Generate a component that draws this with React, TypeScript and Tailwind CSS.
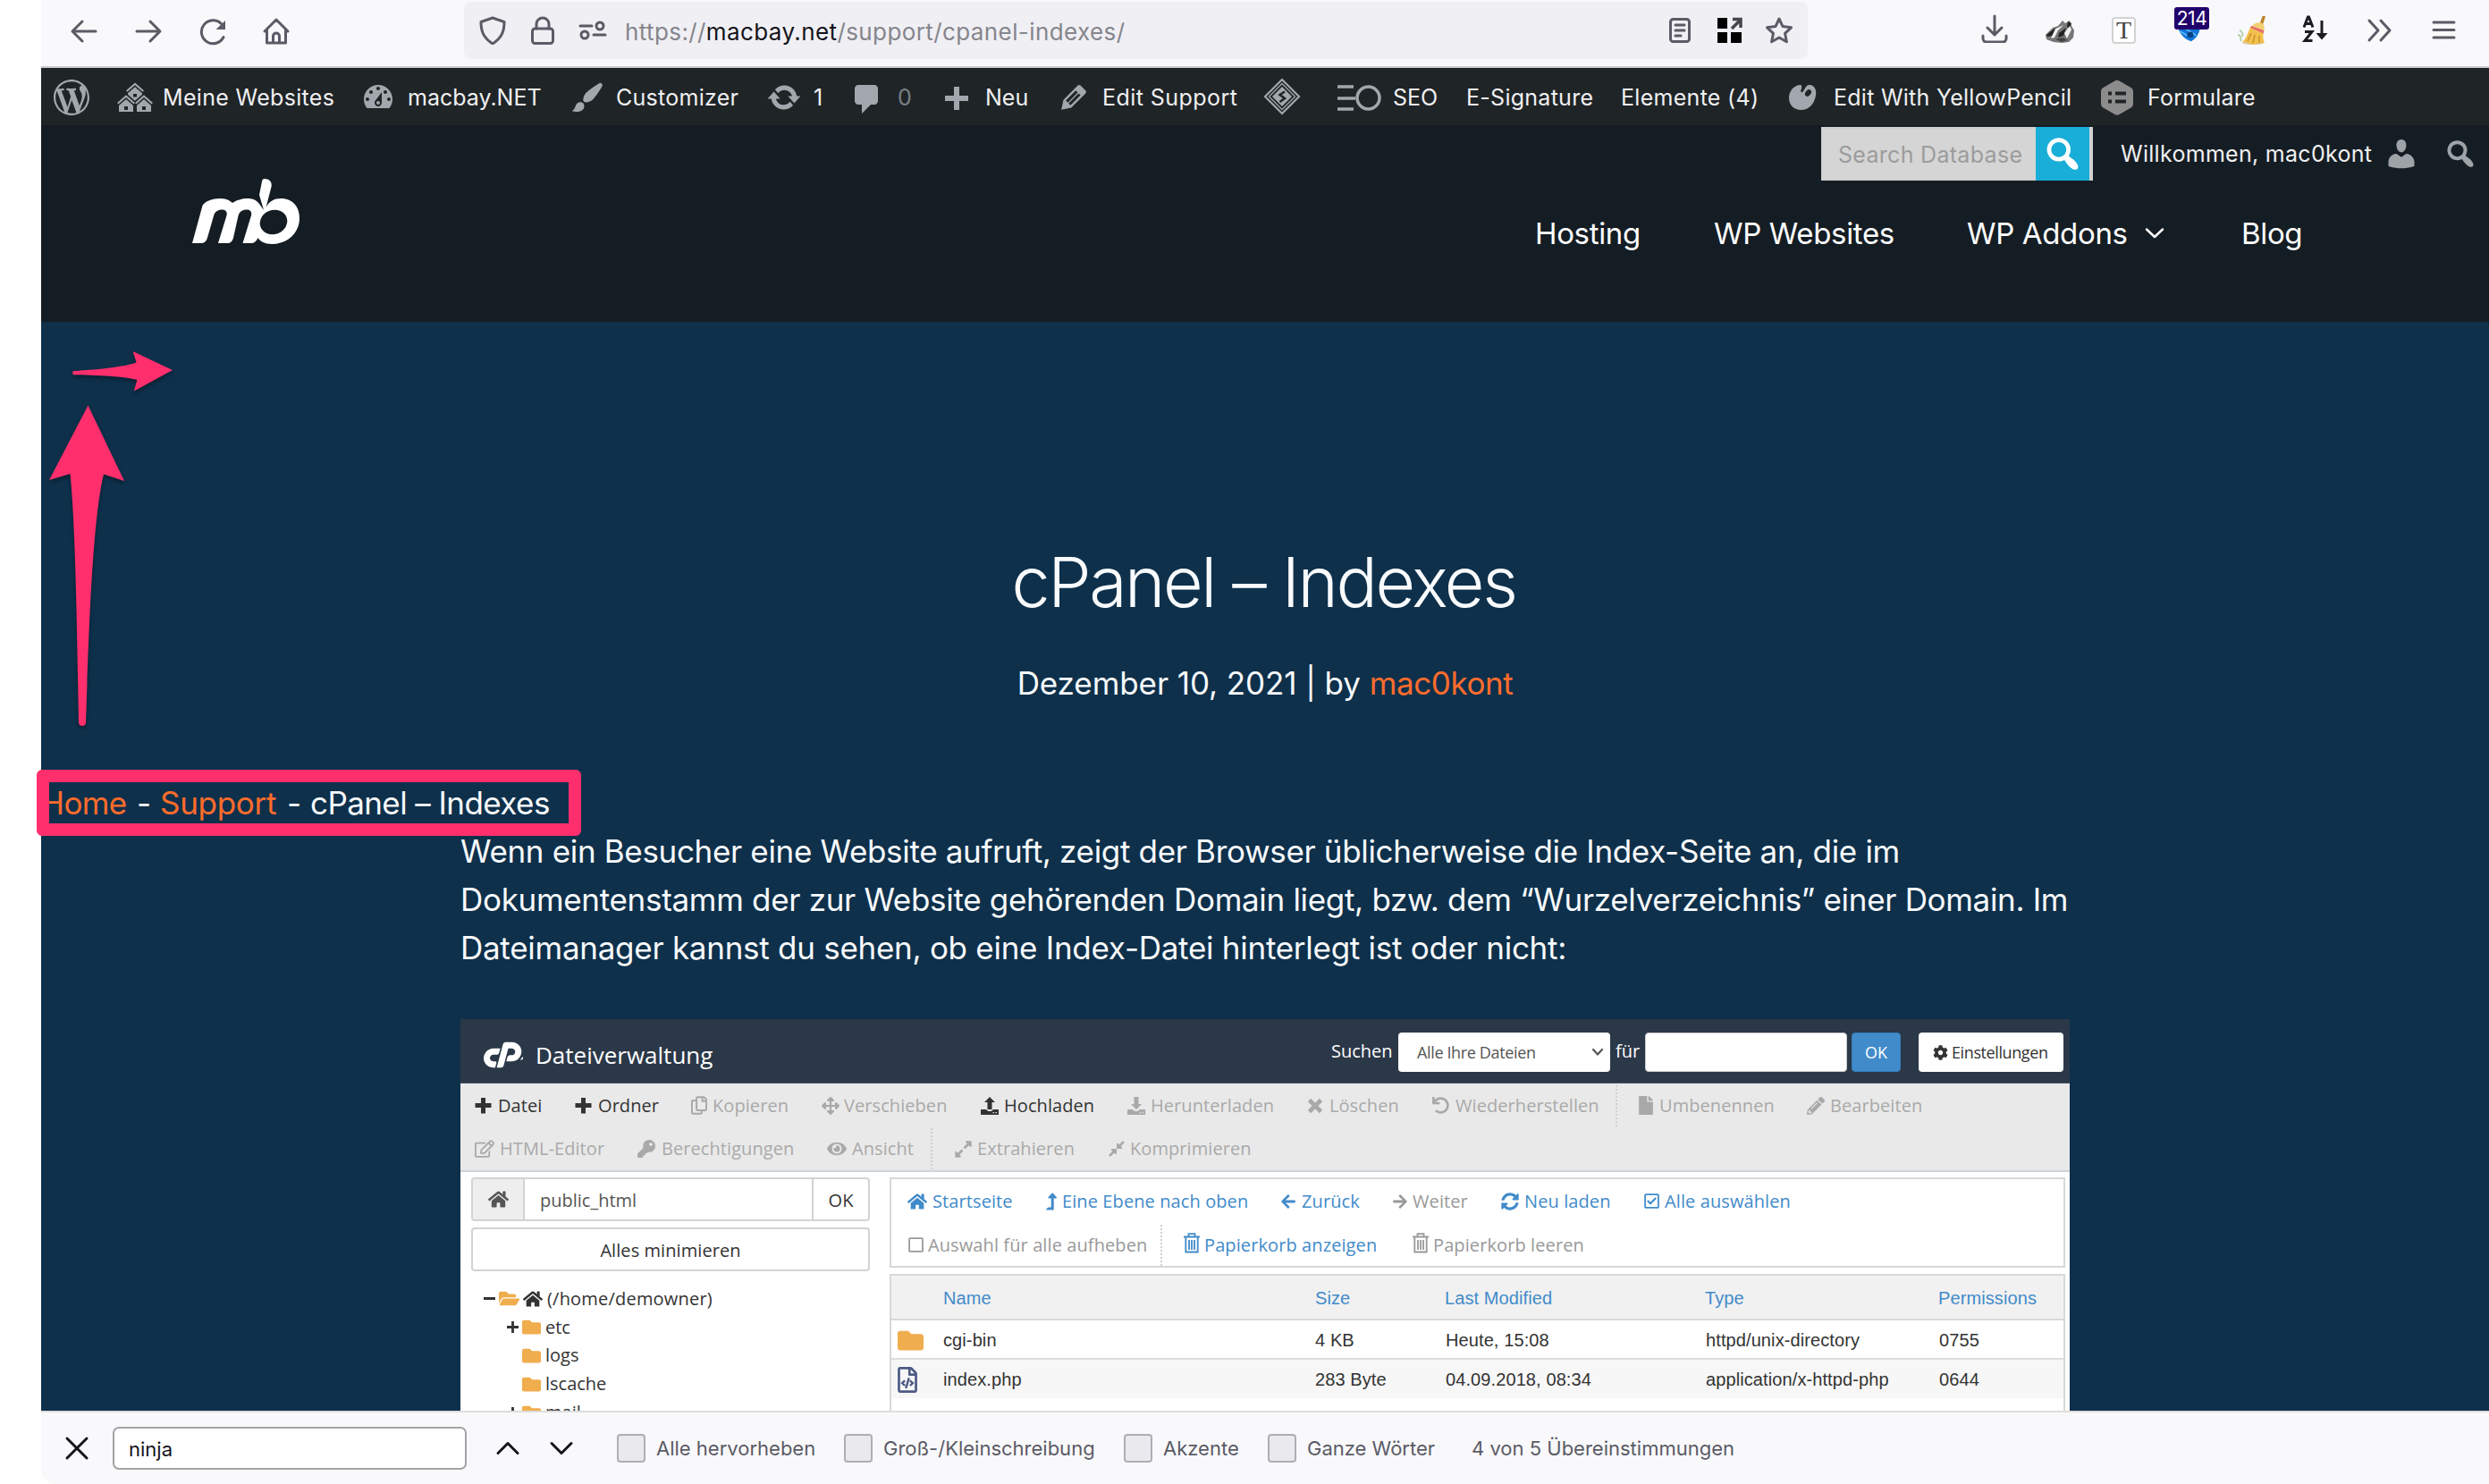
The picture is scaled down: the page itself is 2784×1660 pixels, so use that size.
import type { ReactNode } from "react";
import {
  FaArrowLeft,
  FaArrowRight,
  FaArrowsAlt,
  FaCog,
  FaCompressAlt,
  FaExpandAlt,
  FaEye,
  FaFile,
  FaFolder,
  FaFolderOpen,
  FaHome,
  FaKey,
  FaLevelUpAlt,
  FaPencilAlt,
  FaRegCheckSquare,
  FaRegCopy,
  FaRegEdit,
  FaRegFileCode,
  FaRegSquare,
  FaSyncAlt,
  FaUndo,
} from "react-icons/fa";
import { SiCpanel } from "react-icons/si";

/* ---------- shared bits ---------- */

function Line({ className, children, box = "0 0 32 32" }: { className: string; children: ReactNode; box?: string }) {
  return (
    <svg viewBox={box} className={className} fill="none" stroke="currentColor" strokeWidth="3" strokeLinecap="round" strokeLinejoin="round">
      {children}
    </svg>
  );
}

function Dash({ d, className }: { d: string; className: string }) {
  return (
    <svg viewBox="0 0 20 20" className={className} fill="currentColor">
      <path d={d} />
    </svg>
  );
}

const dash = {
  wordpress:
    "M20 10c0-5.51-4.49-10-10-10C4.48 0 0 4.49 0 10c0 5.52 4.48 10 10 10 5.51 0 10-4.48 10-10zM7.78 15.37L4.37 6.22c.55-.02 1.17-.08 1.17-.08.5-.06.44-1.13-.06-1.11 0 0-1.45.11-2.37.11-.18 0-.37 0-.58-.01C4.12 2.69 6.87 1.11 10 1.11c2.33 0 4.45.87 6.05 2.34-.68-.11-1.65.39-1.65 1.58 0 .74.45 1.36.9 2.1.35.61.55 1.36.55 2.46 0 1.49-1.4 5-1.4 5l-3.03-8.37c.54-.02.82-.17.82-.17.5-.05.44-1.25-.06-1.22 0 0-1.44.12-2.38.12-.87 0-2.33-.12-2.33-.12-.5-.03-.56 1.2-.06 1.22l.92.08 1.26 3.41zM17.41 10c.24-.64.74-1.87.43-4.25.7 1.29 1.05 2.71 1.05 4.25 0 3.29-1.73 6.24-4.4 7.78.97-2.59 1.94-5.2 2.92-7.78zM6.1 18.09C3.12 16.65 1.11 13.53 1.11 10c0-1.3.23-2.48.72-3.59C3.25 10.3 4.67 14.2 6.1 18.09zm4.03-6.63l2.58 6.98c-.86.29-1.76.45-2.71.45-.79 0-1.57-.11-2.29-.33.81-2.38 1.62-4.74 2.42-7.1z",
  sites:
    "M14.27 6.87L10 3.14 5.73 6.87 5 6.14l5-4.38 5 4.38zM14 8.42l-4.05 3.43L6 8.38v-.74l4-3.5 4 3.5v.78zM11 9.7V8H9v1.7h2zm-1.73 4.03L5 10 .73 13.73 0 13l5-4.38L10 13zm10 0L15 10l-4.27 3.73L10 13l5-4.38L20 13zM5 11l4 3.5V18H1v-3.5zm10 0l4 3.5V18h-8v-3.5zm-9 6v-2H4v2h2zm10 0v-2h-2v2h2z",
  gauge:
    "M3.76 16h12.48c1.1-1.37 1.76-3.11 1.76-5 0-4.42-3.58-8-8-8s-8 3.58-8 8c0 1.89.66 3.63 1.76 5zM10 4c.55 0 1 .45 1 1s-.45 1-1 1-1-.45-1-1 .45-1 1-1zM6 6c.55 0 1 .45 1 1s-.45 1-1 1-1-.45-1-1 .45-1 1-1zm8 0c.55 0 1 .45 1 1s-.45 1-1 1-1-.45-1-1 .45-1 1-1zm-5.37 5.55L12 7v6c0 1.1-.9 2-2 2s-2-.9-2-2c0-.57.24-1.08.63-1.45zM4 10c.55 0 1 .45 1 1s-.45 1-1 1-1-.45-1-1 .45-1 1-1zm12 0c.55 0 1 .45 1 1s-.45 1-1 1-1-.45-1-1 .45-1 1-1zm-5 3c0-.55-.45-1-1-1s-1 .45-1 1 .45 1 1 1 1-.45 1-1z",
  brush:
    "M18.33 3.57s.27-.8-.31-1.36c-.53-.52-1.22-.24-1.22-.24-.61.3-5.76 3.47-7.67 5.57-.86.96-2.06 3.79-1.09 4.82.92.98 3.96-.17 4.79-1 2.06-2.06 5.21-7.17 5.5-7.79zM1.4 17.65c2.37-1.56 1.46-3.41 3.23-4.64.93-.65 2.22-.62 3.08.29.63.67.8 2.57-.16 3.46-1.57 1.45-4 1.55-6.15.89z",
  update:
    "M10.2 3.28c3.53 0 6.43 2.61 6.92 6h2.08l-3.5 4-3.5-4h2.32c-.45-1.97-2.21-3.45-4.32-3.45-1.45 0-2.73.71-3.54 1.78L4.95 5.66C6.23 4.2 8.11 3.28 10.2 3.28zm-.4 13.44c-3.52 0-6.43-2.61-6.92-6H.8l3.5-4c1.17 1.33 2.33 2.67 3.5 4H5.48c.45 1.97 2.21 3.45 4.32 3.45 1.45 0 2.73-.71 3.54-1.78l1.71 1.95c-1.28 1.46-3.15 2.38-5.25 2.38z",
  comment: "M5 2h9c1.1 0 2 .9 2 2v7c0 1.1-.9 2-2 2h-2l-5 5v-5H5c-1.1 0-2-.9-2-2V4c0-1.1.9-2 2-2z",
  plus: "M17 7v3h-5v5H9v-5H4V7h5V2h3v5h5z",
  edit: "M13.89 3.39l2.71 2.72c.46.46.42 1.24.03 1.64l-8.01 8.02-5.56 1.16 1.16-5.58s7.6-7.63 7.99-8.03c.39-.39 1.22-.39 1.68.07zm-2.73 2.79l-5.59 5.61 1.11 1.11 5.54-5.65zm-2.97 8.23l5.58-5.6-1.07-1.08-5.59 5.6z",
  search:
    "M12.14 4.18c1.87 1.87 2.11 4.75.72 6.89.12.1.22.21.36.31.2.16.47.36.81.59.34.24.56.39.66.47.42.31.73.57.94.78.32.32.6.65.84 1 .25.35.44.69.59 1.04.14.35.21.68.18 1-.02.32-.14.59-.36.81s-.49.34-.81.36c-.31.02-.65-.04-.99-.19-.35-.14-.7-.34-1.04-.59-.35-.24-.68-.52-1-.84-.21-.21-.47-.52-.77-.93-.1-.13-.25-.35-.47-.66-.22-.32-.4-.57-.56-.78-.16-.2-.29-.35-.44-.5-2.07 1.09-4.69.76-6.44-.98-2.14-2.15-2.14-5.64 0-7.78 2.15-2.15 5.63-2.15 7.78 0zm-1.41 6.36c1.36-1.37 1.36-3.58 0-4.95-1.37-1.37-3.59-1.37-4.95 0-1.37 1.37-1.37 3.58 0 4.95 1.36 1.37 3.58 1.37 4.95 0z",
  user: "M10 9.25c-2.27 0-2.73-3.44-2.73-3.44C7 4.02 7.82 2 9.97 2c2.16 0 2.98 2.02 2.71 3.81 0 0-.41 3.44-2.68 3.44zm0 2.57L12.72 10c2.39 0 4.52 2.33 4.52 4.53v2.49s-3.65 1.13-7.24 1.13c-3.65 0-7.24-1.13-7.24-1.13v-2.49c0-2.25 1.94-4.48 4.47-4.48z",
};

/* ---------- browser toolbar ---------- */

function Toolbar() {
  return (
    <div className="flex h-[76px] shrink-0 border-b-2 border-[#cccccc] bg-[#f9f9fb] pl-8 text-[#5b5b66]">
      <div className="flex h-[70px] w-[441px] gap-10 pt-[19px]">
        <Line className="size-8"><path d="M29 16H4M14 5L3 16l11 11" /></Line>
        <Line className="size-8"><path d="M3 16h25M18 5l11 11-11 11" /></Line>
        <Line className="size-8">
          <path d="M28 22.5A13 13 0 1 1 25.5 7.5" />
          <path d="M30 4v10H19.500z" fill="currentColor" stroke="none" />
        </Line>
        <Line className="-ml-px size-8">
          <path d="M3 16L16 3l13 13M5.500 14v15h21V14M12.500 29v-7.500a3.500 3.500 0 0 1 7 0V29" />
        </Line>
      </div>
      <div className="mt-0.5 flex h-16 w-[1503px] rounded-lg bg-[#f0eff4] pt-4 text-[#5b5b66]">
        <Line className="ml-[16px] size-8"><path d="M16 2L29 6.500c0 11-3 18-13 24.500C6 24.500 3 17.500 3 6.500z" /></Line>
        <Line className="ml-[24px] size-8">
          <rect x="4.500" y="14" width="23" height="16.500" rx="3" />
          <path d="M9 14V9a7 7 0 0 1 14 0v5" />
        </Line>
        <Line className="ml-[24px] size-8">
          <path d="M2 11h13M17 21h13" />
          <circle cx="24" cy="11" r="4" />
          <circle cx="7" cy="21" r="4" />
        </Line>
        <span className="ml-[20px] mt-0.5 h-8 w-[1164px] whitespace-nowrap text-[26px] leading-8 tracking-[0.4px] text-[#85858c]">
          https://<span className="text-[#15141a]">macbay.net</span>/support/cpanel-indexes/
        </span>
        <Line className="size-8">
          <rect x="5.500" y="3.500" width="21" height="25" rx="3" />
          <path d="M11 10h10M11 16h10M11 22h6" />
        </Line>
        <svg viewBox="0 0 32 32" className="ml-[23px] size-8">
          <path d="M3 2h11v12H3zM3 18h11v12H3zM18 18h12v12H18z" fill="#000" />
          <path d="M19 14l9-9M20 3.500h9V13" fill="none" stroke="#45454d" strokeWidth="3.500" />
        </svg>
        <Line className="ml-[24px] size-8">
          <path d="M16 3l4 8.600 9.500 1.200-7 6.500 1.900 9.400L16 24l-8.400 4.700 1.900-9.400-7-6.500 9.500-1.200z" />
        </Line>
      </div>
      <div className="flex pt-4 pl-[192px]">
        <Line className="ml-[1px] size-8"><path d="M16 2v21M8 15l8 8 8-8M3 24v3a4 4 0 0 0 4 4h18a4 4 0 0 0 4-4v-3" /></Line>
        <Badger />
        <div className="ml-[41px] mt-[3px] h-[30px] w-[27px] rounded-sm border-2 border-[#d2d2d2] bg-white text-center font-['Liberation_Serif'] text-[28px] leading-[26px] text-[#444]">
          T
        </div>
        <div className="relative ml-[43px] h-9 w-9">
          <svg viewBox="0 0 34 36" className="h-9 w-8">
            <path d="M3 6h28c1 10-2 20-11 25C11 28 4 21 3 6z" fill="#1173d4" />
            <path d="M7 19l8 5M12 15l14 9" stroke="#5bb4ff" strokeWidth="2" />
            <circle cx="19" cy="23" r="3.500" fill="#0b3f7e" />
          </svg>
          <span className="absolute -top-2 left-0 h-[25px] w-[39px] rounded-[3px] bg-[#21006b] text-center text-[21px] leading-[25px] tracking-[-0.5px] text-white">
            214
          </span>
        </div>
        <Broom />
        <svg viewBox="0 0 32 32" className="ml-[38px] size-8 text-[#1c1b22]" fill="none" stroke="currentColor" strokeWidth="3">
          <path d="M4 14.500L8.500 3h1L14 14.500M5.500 10.500h7M5 19.500h8L5 29.500h8.500M24 7v18" />
          <path d="M17.500 21h13L24 28.500z" fill="currentColor" stroke="none" />
        </svg>
        <Line className="ml-[41px] size-8"><path d="M4 7l10 11L4 29M17 7l10 11-10 11" /></Line>
        <Line className="ml-[40px] size-8"><path d="M4 9h23M4 17.500h23M4 26h23" /></Line>
      </div>
    </div>
  );
}

function Badger() {
  return (
    <svg viewBox="0 0 34 26" className="ml-[40px] mt-[6px] h-[26px] w-[34px]">
      <path d="M1 17L9 9l6-2 5-6 3 3 5-3 2 6 3 5-1 8-5 5-8 1-9-1-8-3z" fill="#777" />
      <path d="M2 17l9-7 7-3-5 8-5 3-5 1zM26 2l4 2-2 6-3-2z" fill="#242424" />
      <path d="M12 10l9-4-6 6-4 8-4 1zM22 15l6-8 2 4-5 10z" fill="#f0f0f0" />
      <path d="M16 15l8-6-3 9-6 2z" fill="#222" />
      <path d="M12 22l8-2 6 3-7 2z" fill="#444" />
    </svg>
  );
}

function Broom() {
  return (
    <svg viewBox="0 0 34 34" className="ml-[33px] mt-[2px] size-[34px]">
      <ellipse cx="19" cy="30" rx="12" ry="2" fill="#d0d0d0" />
      <path d="M31 1l-3 9" stroke="#b9832c" strokeWidth="3.500" strokeLinecap="round" />
      <path d="M17 11l14 6c-1 5-1 9 1 13l-13 2-12-3c5-4 6-11 10-18z" fill="#f3c04c" />
      <path d="M18 11c3-4 9-5 13-2l1 8-14-5z" fill="#f2cf72" />
      <path d="M16 13l15 6.500v-3.500L17 11z" fill="#e56b74" />
      <path d="M4 16c3 1 4 4 3 7M2 21c3 0 4 4 3 7" stroke="#b4d0ac" strokeWidth="2" fill="none" />
      <path d="M17 19l-4 9M21 21l-2 9M26 22v8" stroke="#cc912a" strokeWidth="1.500" />
    </svg>
  );
}

/* ---------- WordPress admin bar ---------- */

function AdminBar() {
  return (
    <div className="flex h-16 shrink-0 items-center whitespace-nowrap bg-[#1f2427] pt-px text-[25px] text-[#f0f0f1] [&_svg]:shrink-0 [&_svg]:text-[#a2a7ad] [&>span]:shrink-0 [&>span]:pl-px [&>span]:pt-[2px]">
      <Dash d={dash.wordpress} className="ml-[14px] size-10" />
      <Dash d={dash.sites} className="ml-[31px] size-10" />
      <span className="ml-[10px] w-[222px] tracking-[0.32px]">Meine Websites</span>
      <Dash d={dash.gauge} className="size-10" />
      <span className="ml-[12px] w-[182px]">macbay.NET</span>
      <Dash d={dash.brush} className="size-10" />
      <span className="ml-[11px] w-[169px] tracking-[0.27px]">Customizer</span>
      <Dash d={dash.update} className="size-10" />
      <span className="ml-[12px] w-[41px]">1</span>
      <Dash d={dash.comment} className="mt-1 size-10" />
      <span className="ml-[13px] w-[46px] text-[#7b8086]">0</span>
      <Dash d={dash.plus} className="mt-2 size-10" />
      <span className="ml-[12px] w-[80px]">Neu</span>
      <Dash d={dash.edit} className="size-10" />
      <span className="ml-[11px] w-[181px] tracking-[0.45px]">Edit Support</span>
      <svg viewBox="0 0 42 42" className="-mt-0.5 size-[42px]" fill="none" stroke="currentColor" strokeWidth="2.200">
        <path d="M21 2l19 19-19 19L2 21z" />
        <path d="M21 6.500L35.500 21 21 35.500 6.500 21z" strokeWidth="1.300" />
        <path d="M21 10L32 21 21 32 10 21z" fill="currentColor" stroke="none" />
        <path d="M24 15.500L18.500 19l5.500 4-5.500 4" stroke="#1f2427" strokeWidth="2.500" />
      </svg>
      <svg viewBox="0 0 50 30" className="ml-[41px] h-[30px] w-[50px]" fill="none" stroke="currentColor" strokeWidth="3.500">
        <path d="M0 3h18M0 16h20M0 28h18" />
        <circle cx="34.500" cy="15.500" r="12.500" />
      </svg>
      <span className="ml-[11px] w-[82px]">SEO</span>
      <span className="w-[173px] tracking-[0.27px]">E-Signature</span>
      <span className="w-[188px] tracking-[0.29px]">Elemente (4)</span>
      <svg viewBox="0 0 32 30" className="h-[30px] w-8" fill="currentColor">
        <path d="M13 1C6 2 1 8 1 15.500 1 24 7 29 14.500 29 23 29 29 23 31 13c1-6-1-11-6-12-4-.5-5 2-8 7-1.500 2.500-3.500 1-2.500-1.500S16 .500 13 1z" />
        <ellipse cx="22.500" cy="10" rx="3" ry="4.200" transform="rotate(38 22.500 10)" fill="#1f2427" />
      </svg>
      <span className="ml-[18px] w-[299px] tracking-[0.26px]">Edit With YellowPencil</span>
      <svg viewBox="0 0 36 40" className="ml-px h-10 w-9" fill="#8c8c8c">
        <path d="M15.500 1.400a5 5 0 0 1 5 0l13 7.500a5 5 0 0 1 2.500 4.300v14a5 5 0 0 1-2.500 4.300l-13 7.500a5 5 0 0 1-5 0l-13-7.500A5 5 0 0 1 0 27.200v-14A5 5 0 0 1 2.500 8.900z" />
        <path d="M8 13.500h4v4H8zM16 13.500h12v4H16zM8 22.500h4v4H8zM16 22.500h12v4H16z" fill="#1f2427" />
      </svg>
      <span className="ml-[15px] tracking-[0.2px]">Formulare</span>
    </div>
  );
}

/* ---------- site header ---------- */

function SiteHeader() {
  return (
    <header className="flex h-[220px] shrink-0 whitespace-nowrap bg-[#151d24] text-white">
      <svg viewBox="0 0 124 78" className="ml-[167px] mt-[58px] h-[78px] w-[124px]" fill="currentColor" fillRule="evenodd">
        <path d="M2 74L13.500 32C16 27 25 24 33 24c7 0 11 2 14 5 4-3 11-5 17-5 6 0 10 2 13 6l5 7-5-17L80 5c.3-2 1-3 3-3 6 0 8.500 4 7.500 9L84.500 34C88 27 94 24 101 24c14 0 21 10 21 22 0 16-13 29-31 29-8 0-13-3-15.500-7-2 4-4 6-8 6h-9l9.500-31c1-4-1-6.500-5-6.500-5 0-8 2-9.500 7L48 68c-1.300 4-3 6-7 6h-10l9.500-31c1-4-1-6.500-5-6.500-5 0-8 2-9.500 7L19 68c-1.300 4-3.500 6-7 6z" />
        <ellipse cx="93" cy="50.500" rx="15.500" ry="13.500" transform="rotate(-20 93 50.500)" fill="#151d24" />
      </svg>
      <div className="flex flex-1 flex-col">
        <div className="flex h-16 items-center justify-end pr-[12px] text-[25px] text-[#f0f0f1]">
          <div className="flex h-[60px] w-[304px] border-2 border-[#cfcfcf] bg-[#d5d5d5]">
            <span className="w-[238px] pl-[17px] leading-[59px] tracking-[0.3px] text-[#9c9c9c]">Search Database</span>
            <span className="-my-0.5 flex h-[60px] w-[60px] items-center justify-center bg-[#19aed8] text-white">
              <Dash d={dash.search} className="size-12" />
            </span>
          </div>
          <span className="ml-[31px] w-[294px] pt-[2px] tracking-[0.29px]">Willkommen, mac0kont</span>
          <Dash d={dash.user} className="size-10 text-[#9ea3a8]" />
          <Dash d={dash.search} className="ml-[26px] size-10 text-[#9ea3a8]" />
        </div>
        <nav className="flex h-[113px] items-center justify-end pr-[204px] text-[33px] tracking-[-0.35px] [&>span]:pt-[2px]">
          <span className="w-[200px]">Hosting</span>
          <span className="w-[283px]">WP Websites</span>
          <span className="w-[198px]">WP Addons</span>
          <Line box="0 0 24 16" className="mr-[85px] h-4 w-6"><path d="M3 3.500l9 8.500 9-8.500" strokeWidth="2.500" /></Line>
          <span className="w-[73px]">Blog</span>
        </nav>
      </div>
    </header>
  );
}

/* ---------- file manager ---------- */

type Tool = { icon: ReactNode; label: string; slot: string; on?: boolean; divider?: boolean };

function TrayArrow({ up }: { up?: boolean }) {
  return (
    <svg viewBox="0 0 20 20" className="h-5 w-5" fill="currentColor">
      <path d={up ? "M10 0l6 6h-3.500v8h-5V6H4z" : "M10 14l6-6h-3.500V0h-5v8H4z"} />
      <path d="M0 14h6.200c.8 1.500 2 2 3.800 2s3-.5 3.800-2H20v6H0zm13.500 3v1.200h1.500V17zm3 0v1.200H18V17z" fillRule="evenodd" />
    </svg>
  );
}

function Plus() {
  return (
    <svg viewBox="0 0 19 19" className="size-[19px]" fill="currentColor">
      <path d="M7 1h5v6h6.500v5H12v6.500H7V12H.500V7H7z" />
    </svg>
  );
}

function Cross() {
  return (
    <svg viewBox="0 0 18 18" className="mr-[2px] size-[18px]" fill="none" stroke="currentColor" strokeWidth="4.800">
      <path d="M2.500 2.500l13 13M15.500 2.500l-13 13" />
    </svg>
  );
}

function Trash() {
  return (
    <svg viewBox="0 0 18 23" className="-mt-1 h-[23px] w-[18px]" fill="none" stroke="currentColor" strokeWidth="1.800">
      <path d="M0 4.500h18M5.500 4V1.200h7V4M2.300 4.500V21.500h13.400v-17M6 8v11M9 8v11M12 8v11" />
    </svg>
  );
}

function ToolRow({ items, base }: { items: Tool[]; base: string }) {
  return (
    <div className={base}>
      {items.map((t) => (
        <div key={t.label} className={t.slot}>
          {t.icon}
          <span>{t.label}</span>
          {t.divider && <i className="ml-auto mr-[24px] h-[46px] border-l-2 border-dotted border-[#cfcfcf]" />}
        </div>
      ))}
    </div>
  );
}

const toolbarTop: Tool[] = [
  { icon: <Plus />, label: "Datei", slot: "flex items-center gap-[7px] w-[112px] text-[#333]" },
  { icon: <Plus />, label: "Ordner", slot: "flex items-center gap-[7px] w-[130px] text-[#333]" },
  { icon: <FaRegCopy className="h-[21px] w-[18px]" />, label: "Kopieren", slot: "flex items-center gap-[6px] w-[146px]" },
  { icon: <FaArrowsAlt className="size-[20px]" />, label: "Verschieben", slot: "flex items-center gap-[5px] w-[178px]" },
  { icon: <TrayArrow up />, label: "Hochladen", slot: "flex items-center gap-[6px] w-[164px] text-[#333]" },
  { icon: <TrayArrow />, label: "Herunterladen", slot: "flex items-center gap-[6px] w-[201px]" },
  { icon: <Cross />, label: "Löschen", slot: "flex items-center gap-[5px] w-[140px]" },
  { icon: <FaUndo className="size-[19px]" />, label: "Wiederherstellen", slot: "flex items-center gap-[7px] w-[231px]", divider: true },
  { icon: <FaFile className="h-[21px] w-[16px]" />, label: "Umbenennen", slot: "flex items-center gap-[7px] w-[188px]" },
  { icon: <FaPencilAlt className="size-[20px]" />, label: "Bearbeiten", slot: "flex items-center gap-[6px]" },
];

const toolbarBottom: Tool[] = [
  { icon: <FaRegEdit className="size-[22px]" />, label: "HTML-Editor", slot: "flex items-center gap-[6px] w-[182px]" },
  { icon: <FaKey className="size-[20px]" />, label: "Berechtigungen", slot: "flex items-center gap-[7px] w-[212px]" },
  { icon: <FaEye className="size-[22px]" />, label: "Ansicht", slot: "flex items-center gap-[6px] w-[142px]", divider: true },
  { icon: <FaExpandAlt className="size-[21px]" />, label: "Extrahieren", slot: "flex items-center gap-[5px] w-[172px]" },
  { icon: <FaCompressAlt className="size-[20px]" />, label: "Komprimieren", slot: "flex items-center gap-[5px]" },
];

const actionsTop: Tool[] = [
  { icon: <FaHome className="size-[22px]" />, label: "Startseite", slot: "flex items-center gap-[6px] w-[155px]" },
  { icon: <FaLevelUpAlt className="h-[20px] w-[12px]" />, label: "Eine Ebene nach oben", slot: "flex items-center gap-[6px] w-[262px]" },
  { icon: <FaArrowLeft className="size-[18px]" />, label: "Zurück", slot: "flex items-center gap-[6px] w-[125px]" },
  { icon: <FaArrowRight className="size-[18px]" />, label: "Weiter", slot: "flex items-center gap-[5px] w-[122px] text-[#999]" },
  { icon: <FaSyncAlt className="size-[20px]" />, label: "Neu laden", slot: "flex items-center gap-[6px] w-[159px]" },
  { icon: <FaRegCheckSquare className="size-[19px]" />, label: "Alle auswählen", slot: "flex items-center gap-[5px]" },
];

const actionsBottom: Tool[] = [
  { icon: <FaRegSquare className="size-[19px]" />, label: "Auswahl für alle aufheben", slot: "flex items-center gap-[4px] w-[309px] text-[#999]", divider: true },
  { icon: <Trash />, label: "Papierkorb anzeigen", slot: "flex items-center gap-[5px] w-[256px]" },
  { icon: <Trash />, label: "Papierkorb leeren", slot: "flex items-center gap-[5px] text-[#999]" },
];

const files = [
  { icon: <FaFolder className="size-[29px] text-[#f0ad4e]" />, name: "cgi-bin", size: "4 KB", date: "Heute, 15:08", type: "httpd/unix-directory", mode: "0755", row: "grid h-[44px] items-center border-b-2 border-[#ddd] pt-[2px] grid-cols-[58px_416px_146px_291px_261px_auto]" },
  { icon: <FaRegFileCode className="h-[29px] w-[22px] text-[#4e5b85]" />, name: "index.php", size: "283 Byte", date: "04.09.2018, 08:34", type: "application/x-httpd-php", mode: "0644", row: "grid h-[43px] items-center bg-[#f7f7f7] pt-px grid-cols-[58px_416px_146px_291px_261px_auto]" },
];

function FileManager() {
  return (
    <div className="mt-[53px] ml-[469px] flex h-[460px] w-[1800px] shrink-0 flex-col bg-white font-['Open_Sans'] text-[20px] leading-[30px] text-[#333] [&_svg]:shrink-0">
      <div className="flex h-[72px] shrink-0 items-start border-b border-[#46586a] bg-[#2b3848] text-white">
        <SiCpanel
          viewBox="0 9.2 8.25 5.6"
          className="ml-[26px] mt-[25px] h-[30px] w-[44px] [clip-path:polygon(0_0,100%_0,100%_66%,86%_74%,80%_100%,0_100%)]"
        />
        <span className="ml-[14px] mt-[21px] w-[890px] text-[26px] leading-[38px]">Dateiverwaltung</span>
        <span className="mt-[21px] w-[75px] leading-[30px]">Suchen</span>
        <div className="mt-[15px] flex h-11 w-[237px] items-center rounded bg-white pl-[21px] text-[18px] tracking-[-0.36px] text-[#555]">
          <span className="w-[195px]">Alle Ihre Dateien</span>
          <Line box="0 0 14 10" className="h-2.5 w-3.5"><path d="M2 2l5 5.500L12 2" strokeWidth="2.200" /></Line>
        </div>
        <span className="ml-[6px] mt-[21px] w-[33px] leading-[30px]">für</span>
        <div className="mt-[15px] h-11 w-[226px] rounded border border-[#ccc] bg-white" />
        <div className="ml-[5px] mt-[15px] h-11 w-[55px] rounded border border-[#357ebd] bg-[#428bca] text-center text-[18px] leading-[43px]">OK</div>
        <div className="ml-[20px] mt-[15px] flex h-11 w-[162px] items-center rounded bg-white pl-[16px] text-[18px] tracking-[-0.4px] text-[#333]">
          <FaCog className="mr-[4px] size-[17px]" />
          Einstellungen
        </div>
      </div>
      <div className="h-[99px] shrink-0 whitespace-nowrap border-b-2 border-[#ccd3d8] bg-[#e9e9e9] pl-4 tracking-[0.07px] text-[#a9a9a9]">
        <ToolRow base="flex h-[49px] items-center" items={toolbarTop} />
        <ToolRow base="flex h-[48px] items-center" items={toolbarBottom} />
      </div>
      <div className="flex min-h-0 flex-1 pt-[6px]">
        <aside className="ml-[12px] w-[446px]">
          <div className="flex h-[49px] overflow-hidden rounded border-2 border-[#d3d3d3]">
            <span className="flex w-[58px] items-center justify-center border-r-2 border-[#d3d3d3] bg-[#eeeeee] text-[#555]">
              <FaHome className="size-[23px]" />
            </span>
            <span className="w-[321px] pl-[17px] leading-[47px] text-[#555]">public_html</span>
            <span className="flex-1 border-l-2 border-[#d3d3d3] text-center leading-[47px]">OK</span>
          </div>
          <div className="mt-[7px] h-[49px] rounded border-2 border-[#d3d3d3] text-center leading-[47px] tracking-[0.07px]">Alles minimieren</div>
          <ul className="mt-[15px] [&>li]:flex [&>li]:h-[31.8px] [&>li]:items-center">
            <li className="pl-[14px]">
              <i className="mr-[4px] h-[3px] w-[13px] bg-[#333]" />
              <FaFolderOpen className="mr-[4px] size-[23px] text-[#f0ad4e]" />
              <FaHome className="mr-[5px] size-[22px]" />
              <span className="tracking-[0.2px]">(/home/demowner)</span>
            </li>
            {["etc", "logs", "lscache", "mail"].map((name) => (
              <li key={name} className="pl-[40px]">
                <span className="mr-[4px] w-[13px]">
                  {(name === "etc" || name === "mail") && (
                    <svg viewBox="0 0 13 13" className="size-[13px]" stroke="currentColor" strokeWidth="2.800">
                      <path d="M0 6.500h13M6.500 0v13" />
                    </svg>
                  )}
                </span>
                <FaFolder className="mr-[5px] size-[21px] text-[#f0ad4e]" />
                <span>{name}</span>
              </li>
            ))}
          </ul>
        </aside>
        <div className="ml-[22px] flex w-[1315px] flex-col whitespace-nowrap">
          <div className="h-[101px] shrink-0 border-2 border-[#d8d8d8] pl-[18px] tracking-[0.1px] text-[#428bca]">
            <ToolRow base="flex h-[49px] items-center" items={actionsTop} />
            <ToolRow base="flex h-[49px] items-center" items={actionsBottom} />
          </div>
          <div className="mt-[7px] flex-1 border-2 border-b-0 border-[#d8d8d8] font-['Liberation_Sans'] tracking-[0.1px]">
            <div className="grid h-[50px] grid-cols-[58px_416px_145px_291px_261px_auto] items-center border-b-2 border-[#d8d8d8] bg-[#f1f1f1] pt-[2px] text-[#428bca]">
              <span />
              <span>Name</span>
              <span>Size</span>
              <span>Last Modified</span>
              <span>Type</span>
              <span>Permissions</span>
            </div>
            {files.map((f) => (
              <div key={f.name} className={f.row}>
                <span className="pl-[7px]">{f.icon}</span>
                <span>{f.name}</span>
                <span>{f.size}</span>
                <span>{f.date}</span>
                <span>{f.type}</span>
                <span>{f.mode}</span>
              </div>
            ))}
          </div>
        </div>
      </div>
    </div>
  );
}

/* ---------- article ---------- */

function Article() {
  return (
    <main className="flex h-[1218px] shrink-0 flex-col overflow-hidden whitespace-nowrap bg-[#0e304b] text-[35px] leading-[54px] text-[#f8fafc]">
      <h1 className="mt-[243px] pr-[3px] text-center text-[77px] font-light leading-[96px] tracking-[-2.35px]">cPanel – Indexes</h1>
      <p className="mt-[38px] text-center tracking-[-0.08px]">
        Dezember 10, 2021 | by <span className="tracking-[-0.4px] text-[#ff6c2c]">mac0kont</span>
      </p>
      <div className="mt-[80px] flex">
        <span className="w-[107px] tracking-[-0.6px] text-[#ff6c2c]">Home</span>
        <span className="w-[26px]">-</span>
        <span className="w-[142px] tracking-[-0.3px] text-[#ff6c2c]">Support</span>
        <span className="w-[26px]">-</span>
        <span className="tracking-[-0.58px]">cPanel – Indexes</span>
      </div>
      <p className="ml-[469px] tracking-[-0.33px]">
        Wenn ein Besucher eine Website aufruft, zeigt der Browser üblicherweise die Index-Seite an, die im
        <br />
        <span className="tracking-[-0.31px]">
          Dokumentenstamm der zur Website gehörenden Domain liegt, bzw. dem “Wurzelverzeichnis” einer Domain. Im
        </span>
        <br />
        <span className="tracking-[-0.27px]">Dateimanager kannst du sehen, ob eine Index-Datei hinterlegt ist oder nicht:</span>
      </p>
      <FileManager />
    </main>
  );
}

/* ---------- find bar ---------- */

function FindBar() {
  return (
    <div className="flex h-[82px] shrink-0 items-center whitespace-nowrap rounded-bl-2xl border-t-2 border-[#dedede] bg-[#f9f9fb] text-[22px] text-[#5b5b66]">
      <Line box="0 0 28 28" className="ml-[26px] size-7 text-[#15141a]"><path d="M3 3l22 22M25 3L3 25" /></Line>
      <div className="ml-[26px] h-12 w-[396px] rounded-[7px] border-2 border-[#a3a3a6] bg-white pl-[16px] leading-[46px] text-[#15141a]">ninja</div>
      <Line box="0 0 28 16" className="ml-[32px] h-4 w-7 text-[#15141a]"><path d="M3 13.500l11-11 11 11" /></Line>
      <Line box="0 0 28 16" className="ml-[32px] h-4 w-7 text-[#15141a]"><path d="M3 2.500l11 11 11-11" /></Line>
      <Check className="ml-[48px]" />
      <span className="ml-[12px] w-[210px] pt-px">Alle hervorheben</span>
      <Check className="" />
      <span className="ml-[12px] w-[269px] pt-px">Groß-/Kleinschreibung</span>
      <Check className="" />
      <span className="ml-[12px] w-[117px] pt-px">Akzente</span>
      <Check className="" />
      <span className="ml-[12px] w-[184px] pt-px">Ganze Wörter</span>
      <span className="pt-px">4 von 5 Übereinstimmungen</span>
    </div>
  );
}

function Check({ className }: { className: string }) {
  return <i className={`size-8 shrink-0 rounded border-2 border-[#aeaeb4] bg-[#e9e9ee] ${className}`} />;
}

/* ---------- annotations drawn over the page ---------- */

function Annotations() {
  return (
    <>
      <svg viewBox="0 0 220 480" className="absolute left-0 top-[370px] h-[480px] w-[220px] drop-shadow-[0_3px_2px_rgba(0,0,0,0.35)]" fill="#ff2f6d">
        <path d="M193 44L148.600 23l4 12.500c-14 5-44 8-70 9.500a2.200 2.200 0 0 0 0 4.200c26 .3 58 1.800 70.800 5.800l-3.600 12.500z" />
        <path d="M98.500 83.500L55 167l23.500-7c6 60 7.500 170 9.500 279a4.200 4.200 0 0 0 8 0c3.500-110 8-230 20-278.500l23 7.500z" />
      </svg>
      <div className="absolute left-[41px] top-[861px] h-[74px] w-[609px] rounded-md border-[14px] border-[#ff2f6d]" />
    </>
  );
}

export default function App() {
  return (
    <div className="relative h-[1660px] w-[2784px] overflow-hidden bg-white pl-[46px] font-['Inter']">
      <div className="flex h-[1660px] flex-col">
        <Toolbar />
        <AdminBar />
        <SiteHeader />
        <Article />
        <FindBar />
      </div>
      <Annotations />
    </div>
  );
}
